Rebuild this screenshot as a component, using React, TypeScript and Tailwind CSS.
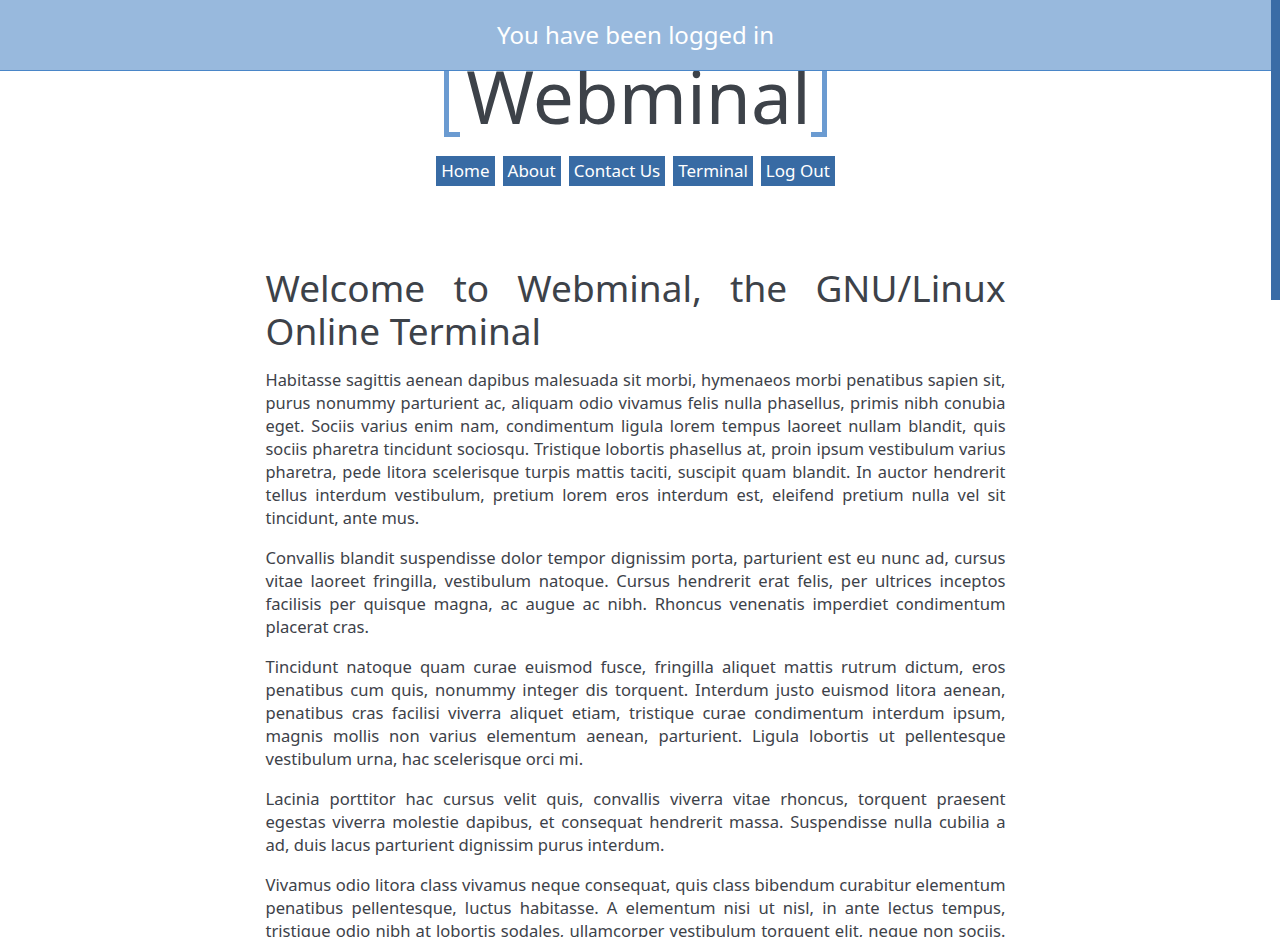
import React from "react";

const TEXT = "#3d4249";

const paragraphs = [
  "Habitasse sagittis aenean dapibus malesuada sit morbi, hymenaeos morbi penatibus sapien sit, purus nonummy parturient ac, aliquam odio vivamus felis nulla phasellus, primis nibh conubia eget. Sociis varius enim nam, condimentum ligula lorem tempus laoreet nullam blandit, quis sociis pharetra tincidunt sociosqu. Tristique lobortis phasellus at, proin ipsum vestibulum varius pharetra, pede litora scelerisque turpis mattis taciti, suscipit quam blandit. In auctor hendrerit tellus interdum vestibulum, pretium lorem eros interdum est, eleifend pretium nulla vel sit tincidunt, ante mus.",
  "Convallis blandit suspendisse dolor tempor dignissim porta, parturient est eu nunc ad, cursus vitae laoreet fringilla, vestibulum natoque. Cursus hendrerit erat felis, per ultrices inceptos facilisis per quisque magna, ac augue ac nibh. Rhoncus venenatis imperdiet condimentum placerat cras.",
  "Tincidunt natoque quam curae euismod fusce, fringilla aliquet mattis rutrum dictum, eros penatibus cum quis, nonummy integer dis torquent. Interdum justo euismod litora aenean, penatibus cras facilisi viverra aliquet etiam, tristique curae condimentum interdum ipsum, magnis mollis non varius elementum aenean, parturient. Ligula lobortis ut pellentesque vestibulum urna, hac scelerisque orci mi.",
  "Lacinia porttitor hac cursus velit quis, convallis viverra vitae rhoncus, torquent praesent egestas viverra molestie dapibus, et consequat hendrerit massa. Suspendisse nulla cubilia a ad, duis lacus parturient dignissim purus interdum.",
  "Vivamus odio litora class vivamus neque consequat, quis class bibendum curabitur elementum penatibus pellentesque, luctus habitasse. A elementum nisi ut nisl, in ante lectus tempus, tristique odio nibh at lobortis sodales, ullamcorper vestibulum torquent elit, neque non sociis. Magna lacinia nunc dis ultricies lectus quam ornare, porta fames sodales nostra.",
];

const navItems = ["Home", "About", "Contact Us", "Terminal", "Log Out"];

function Logo() {
  return (
    <div className="flex justify-center items-end pt-[47px]">
      {/* left bracket */}
      <span className="block w-[16px] h-[90px] border-l-[5px] border-y-[5px] border-[#6b9bd1]" />
      <span className="ml-[6px] mb-[5px] text-[73px] leading-none" style={{ color: TEXT }}>
        Webminal
      </span>
      <span className="block w-[16px] h-[90px] border-r-[5px] border-y-[5px] border-[#6b9bd1]" />
    </div>
  );
}

function Nav() {
  return (
    <nav className="flex justify-center gap-2 mt-[19px]">
      {navItems.map((item) => (
        <a
          key={item}
          href="#"
          className="block h-[30px] px-[5px] bg-[#386ba4] text-white text-[17px] leading-[30px]"
        >
          {item}
        </a>
      ))}
    </nav>
  );
}

export default function App() {
  return (
    <div className="flex h-[937px] overflow-hidden bg-white font-['Noto_Sans',sans-serif]">
      <div className="relative flex-1">
        {/* flash message bar */}
        <div className="absolute top-0 left-0 right-0 z-10 h-[71px] bg-[#98b9dd] border-b border-[#4a86c8] flex items-center justify-center">
          <span className="text-white text-[24px] leading-none">You have been logged in</span>
        </div>

        <Logo />
        <Nav />

        <main className="w-[740px] mx-auto mt-[80px]" style={{ color: TEXT }}>
          <h1 className="text-[37px] leading-[43px] text-justify font-normal">
            Welcome to Webminal, the GNU/Linux Online Terminal
          </h1>
          <div className="mt-[16px] flex flex-col gap-[17px]">
            {paragraphs.map((p, i) => (
              <p
                key={i}
                className={i === 0 ? "text-[16.4px] leading-[23px] text-justify" : "text-[16.6px] leading-[23px] text-justify"}
              >
                {p}
              </p>
            ))}
          </div>
        </main>
      </div>

      {/* scrollbar */}
      <div className="w-[9px] shrink-0 bg-white">
        <div className="h-[300px] bg-[#3a6ca6]" />
      </div>
    </div>
  );
}
